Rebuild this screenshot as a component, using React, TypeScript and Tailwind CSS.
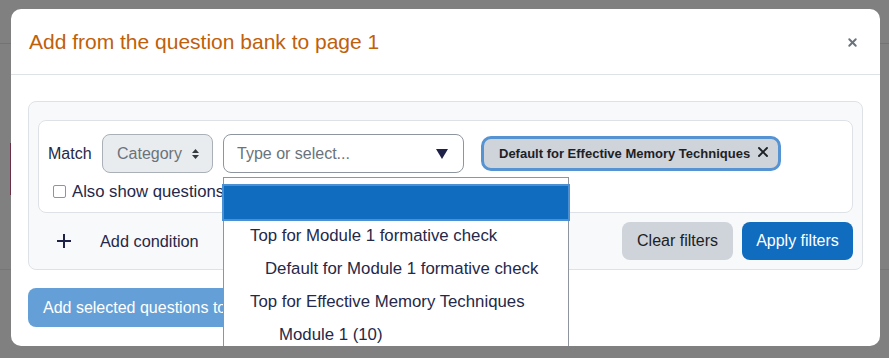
import { X } from "lucide-react"

const navy = "text-[#252848]"

const options = [
    { label: "Top for Module 1 formative check", indent: "pl-[26px]" },
    { label: "Default for Module 1 formative check", indent: "pl-[41px]" },
    { label: "Top for Effective Memory Techniques", indent: "pl-[26px]" },
    { label: "Module 1 (10)", indent: "pl-[55px]" },
]

const App = () => {
    return (
        <div className="relative w-[889px] h-[358px] overflow-hidden bg-[#808080] font-['Liberation_Sans',Arial,sans-serif]">
            {/* page behind the overlay */}
            <div className="absolute left-0 right-0 top-[43px] h-px bg-[#737373]" />
            <div className="absolute left-0 right-0 top-[269px] h-px bg-[#767676]" />
            <div className="absolute left-[10px] top-[143px] w-px h-[52px] bg-[#6b2f45]" />

            <div className="relative ml-[11px] mt-[9px] w-[869px] h-[337px] bg-white rounded-[10px] overflow-hidden">
                <div className="flex items-center justify-between h-[66px] pl-[18px] pr-[21px] border-b border-[#dee2e6]">
                    <h5 className="text-[21px] text-[#bf600b] leading-none">Add from the question bank to page 1</h5>
                    <X size={13} strokeWidth={3.5} className="text-[#6a737b] mt-[2px]" />
                </div>

                <div className="px-[17px] pt-[26px]">
                    <div className="bg-[#f8f9fa] border border-[#dee2e6] rounded-[8px] px-[9px] pt-[18px] pb-[9px]">
                        <div className="bg-white border border-[#dee2e6] rounded-[8px] h-[93px] pl-[9px] pt-[13px]">
                            <div className="flex items-center h-[39px]">
                                <span className={`text-[16px] ${navy} w-[54px]`}>Match</span>
                                <div className="flex items-center justify-between w-[111px] h-[39px] pl-[14px] pr-[12px] bg-[#e9ecef] border border-[#a9b0b8] rounded-[8px] text-[16px] text-[#6a737b]">
                                    <span>Category</span>
                                    <svg width="9" height="12" viewBox="0 0 9 12" className="mt-[1px]">
                                        <path d="M4.5 1 L8 5 H1 Z M4.5 11 L8 7 H1 Z" fill="#343a40" />
                                    </svg>
                                </div>
                                <div className="relative ml-[10px]">
                                    <div className="flex items-center justify-between w-[241px] h-[39px] pl-[13px] pr-[15px] border border-[#8f959e] rounded-[8px] text-[16px] text-[#6a737b]">
                                        <span>Type or select...</span>
                                        <svg width="12" height="10" viewBox="0 0 12 10">
                                            <path d="M0 0 H12 L6 10 Z" fill="#1f2248" />
                                        </svg>
                                    </div>
                                    <div className="absolute left-0 top-[43px] z-10 w-[346px] h-[200px] bg-white border border-[#8f959e] pt-[8px]">
                                        <div className="h-[33px] bg-[#0f6cbf] shadow-[0_0_0_2px_#4a90d2]" />
                                        {options.map((o) => (
                                            <div key={o.label} className={`flex items-center h-[33px] ${o.indent} text-[16.8px] ${navy}`}>
                                                {o.label}
                                            </div>
                                        ))}
                                    </div>
                                </div>
                                <div className="flex items-center ml-[17px] w-[300px] h-[35px] pl-[15px] pr-[7px] bg-[#ced4da] border-[3px] border-[#5593d2] rounded-[10px] text-[#1d2125]">
                                    <span className="text-[13px] font-bold">Default for Effective Memory Techniques</span>
                                    <X size={16} strokeWidth={2.8} className="ml-auto mb-[3px]" />
                                </div>
                            </div>
                            <div className="flex items-center mt-[6px] pl-[5px]">
                                <span className="w-[13px] h-[13px] border border-[#8f959e] rounded-[2px] bg-white" />
                                <span className={`ml-[6px] text-[16.7px] ${navy}`}>Also show questions from subcategories</span>
                            </div>
                        </div>

                        <div className="flex items-center justify-between mt-[9px] h-[38px]">
                            <div className="flex items-center pl-[19px]">
                                <svg width="14" height="14" viewBox="0 0 14 14">
                                    <path d="M7 0 V14 M0 7 H14" stroke="#1f2248" strokeWidth="2" />
                                </svg>
                                <span className={`ml-[29px] text-[16.3px] ${navy}`}>Add condition</span>
                            </div>
                            <div className="flex gap-[9px]">
                                <button className="w-[111px] h-[38px] rounded-[8px] bg-[#ced4da] text-[16px] text-[#1d2125]">Clear filters</button>
                                <button className="w-[111px] h-[38px] rounded-[8px] bg-[#0f6cbf] text-[16px] text-white">Apply filters</button>
                            </div>
                        </div>
                    </div>

                    <button className="mt-[18px] h-[39px] px-[15px] rounded-[8px] bg-[#64a0d7] text-[16px] text-white">
                        Add selected questions to page 1
                    </button>
                </div>
            </div>
        </div>
    )
}

export default App
